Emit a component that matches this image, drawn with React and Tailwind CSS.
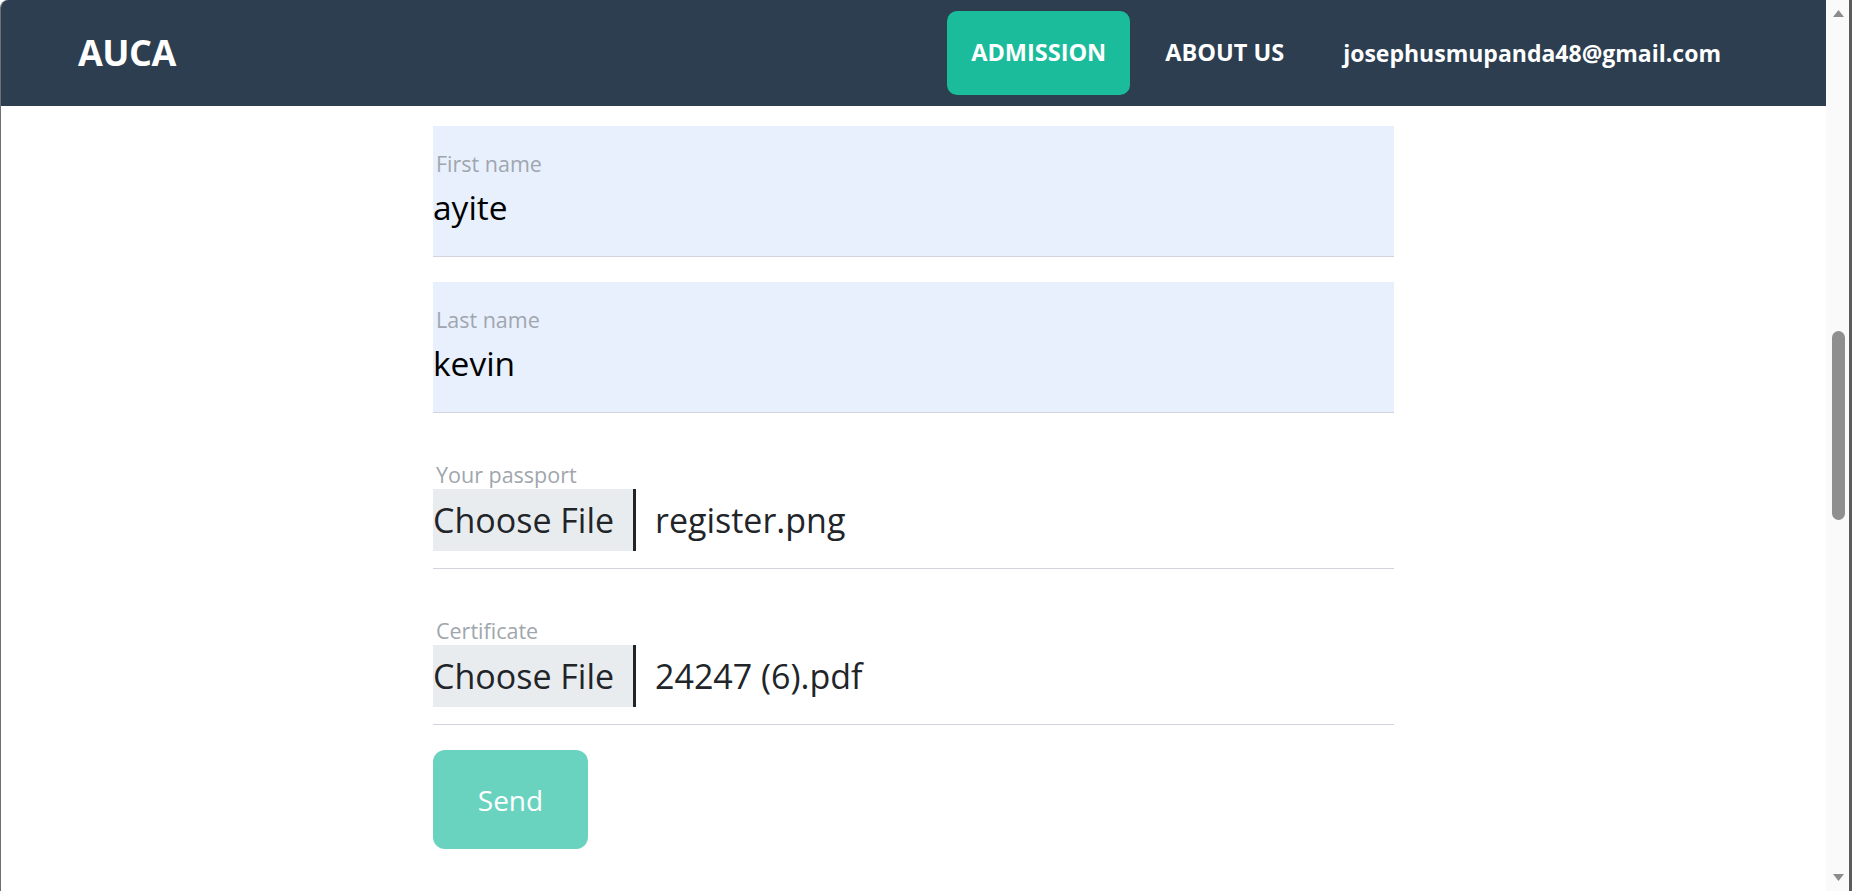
const FIELDS = [
  { id: 'first', label: 'First name', value: 'ayite' },
  { id: 'last', label: 'Last name', value: 'kevin' },
]

const FILES = [
  { id: 'passport', label: 'Your passport', file: 'register.png' },
  { id: 'certificate', label: 'Certificate', file: '24247 (6).pdf' },
]

function Header() {
  return (
    <header className="h-[106px] shrink-0 bg-[#2c3e50] flex items-center justify-between pl-[77px] pr-[81px]">
      <a href="#" className="text-white font-bold text-[36px] leading-none tracking-[-0.5px]">AUCA</a>
      <nav className="flex items-center gap-[11px]">
        <a href="#" className="h-[84px] px-[24px] flex items-center rounded-[10px] bg-[#1abc9c] text-white font-bold text-[23.5px]">ADMISSION</a>
        <a href="#" className="h-[84px] px-[24px] flex items-center text-white font-bold text-[23.5px]">ABOUT US</a>
        <a href="#" className="h-[84px] px-[24px] flex items-center text-white font-bold text-[23px]">josephusmupanda48@gmail.com</a>
      </nav>
    </header>
  )
}

function TextField({ label, value }) {
  return (
    <div className="h-[131px] bg-[#e8f0fe] border-b border-[#d1d5db] pt-[22px]">
      <label className="block pl-[3px] text-[21.5px] leading-[32px] text-[#a0a6ad]">{label}</label>
      <div className="mt-[3px] text-[33.5px] leading-[48px] text-black">{value}</div>
    </div>
  )
}

function FileField({ label, file }) {
  return (
    <div className="h-[131px] border-b border-[#d1d5db] pt-[23px]">
      <label className="block pl-[3px] text-[21.5px] leading-[28px] text-[#a0a6ad]">{label}</label>
      <div className="h-[62px] flex items-center">
        <span className="h-full w-[200px] flex items-center bg-[#e9ecef] text-[34px] text-[#212529]">Choose File</span>
        <span className="h-full w-[3px] bg-[#212529]" />
        <span className="pl-[19px] text-[34px] text-[#212529]">{file}</span>
      </div>
    </div>
  )
}

function Scrollbar() {
  return (
    <div className="w-[23px] shrink-0 bg-[#fafafa] flex flex-col items-center">
      <svg className="mt-[10px] ml-[1px]" width="11" height="7" viewBox="0 0 11 7">
        <path d="M5.5 0L11 7H0z" fill="#8c8c8c" />
      </svg>
      <div className="mt-[314px] ml-[1px] w-[13px] h-[189px] rounded-full bg-[#8f8f8f]" />
      <div className="flex-1" />
      <svg className="mb-[10px] ml-[1px]" width="11" height="7" viewBox="0 0 11 7">
        <path d="M0 0H11L5.5 7z" fill="#8c8c8c" />
      </svg>
    </div>
  )
}

export default function App() {
  return (
    <div className="h-[891px] w-full flex overflow-hidden bg-white font-['Open_Sans',sans-serif]">
      <div className="flex-1 flex flex-col border-l border-[#707070] rounded-tl-[8px] overflow-hidden">
        <Header />
        <main className="w-[961px] mx-auto pt-[20px] flex flex-col gap-[25px]">
          {FIELDS.map(f => <TextField key={f.id} {...f} />)}
          {FILES.map(f => <FileField key={f.id} {...f} />)}
          <button className="w-[155px] h-[99px] rounded-[12px] bg-[#1abc9c]/65 text-white text-[28px]">Send</button>
        </main>
      </div>
      <Scrollbar />
      <div className="w-[3px] shrink-0 bg-[#5c5c5c]" />
    </div>
  )
}
